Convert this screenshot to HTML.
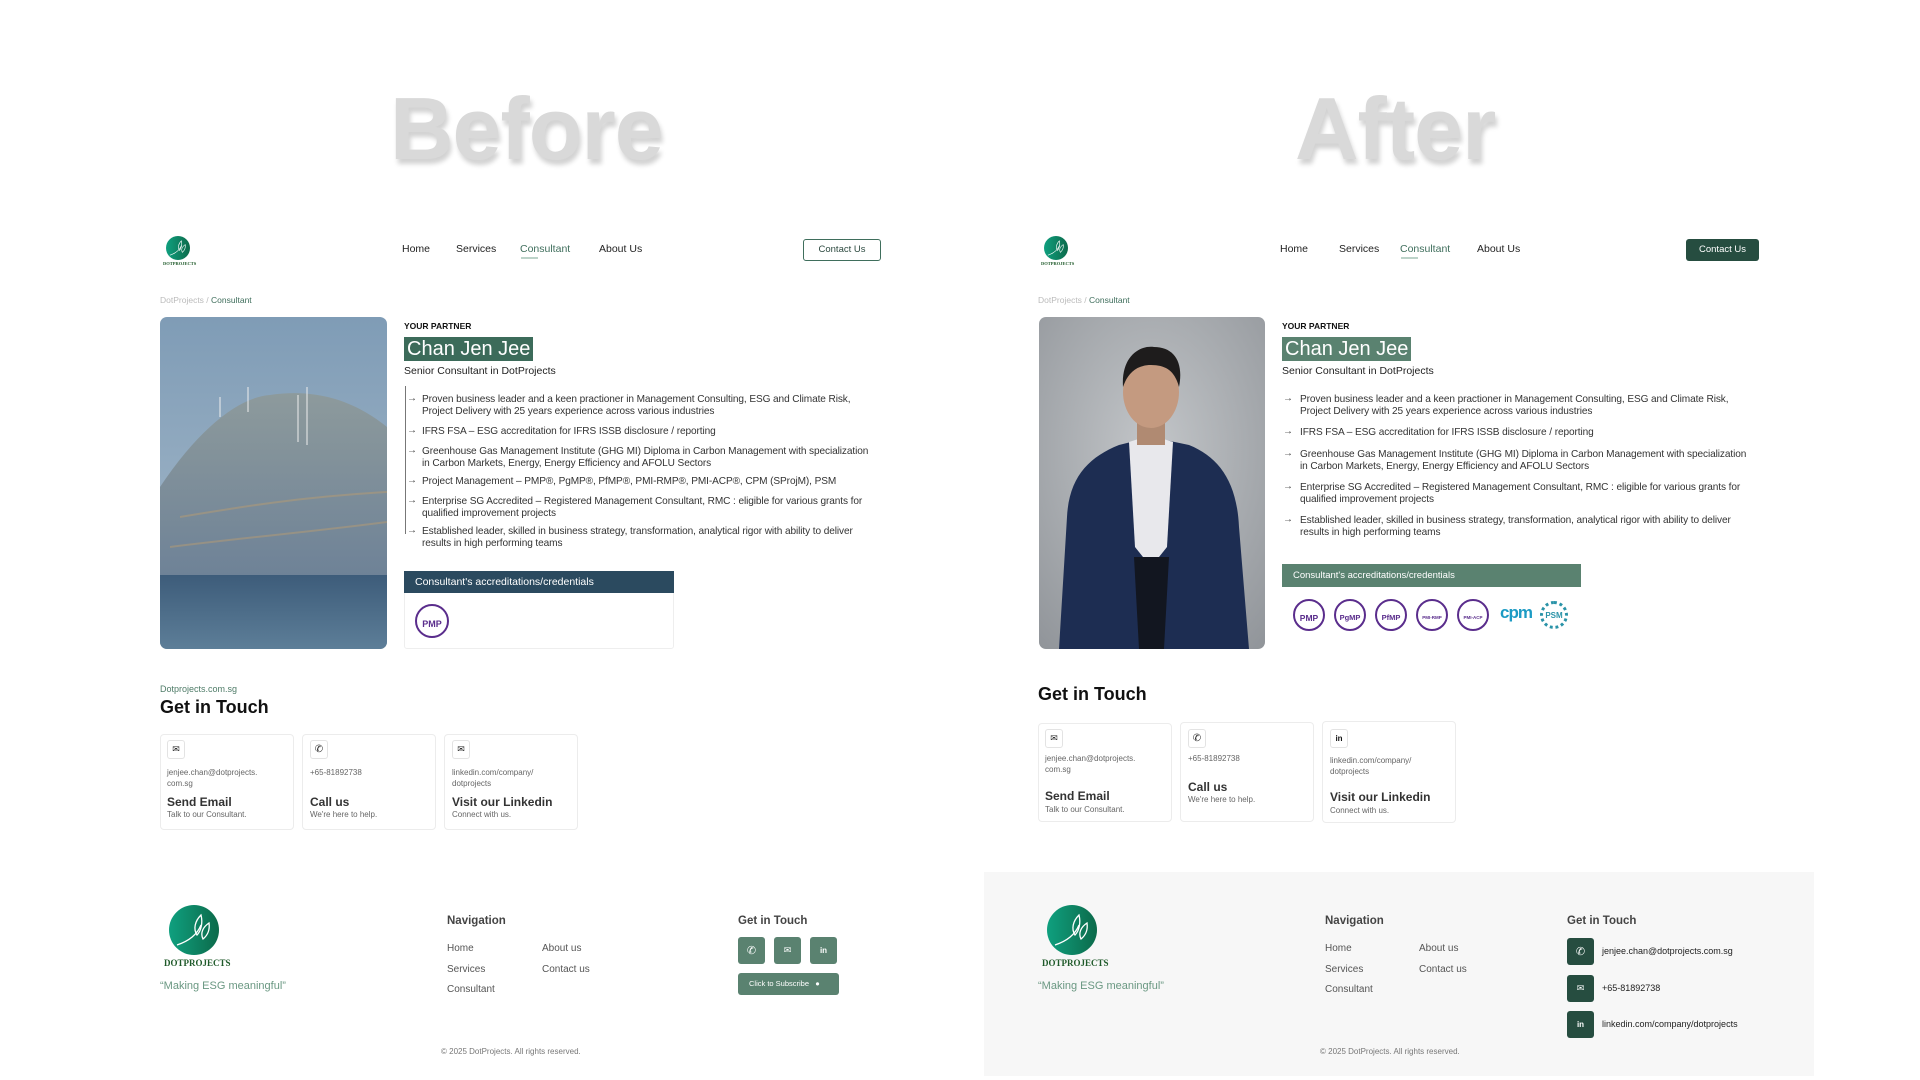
<!DOCTYPE html>
<html><head><meta charset="utf-8"><style>
*{margin:0;padding:0;box-sizing:border-box}
body{width:1920px;height:1080px;background:#fff;font-family:"Liberation Sans",sans-serif;color:#222;position:relative;overflow:hidden}
.a{position:absolute;white-space:nowrap}
.big{font-size:88px;font-weight:bold;color:#d9d9d9;text-shadow:2px 5px 5px rgba(0,0,0,.18);letter-spacing:-1px}
.nav{font-size:10.5px;color:#222}
.nav.act{color:#3f6e5c}
.ul{height:2px;background:#bcd3c9}
.bc{font-size:8.5px;color:#bbb}
.bc b{font-weight:normal;color:#3f6e5c}
.yp{font-size:8.5px;font-weight:bold;color:#111}
.name{background:#3c6b5a;color:#fff;font-size:20px;padding:0 3px;height:24px;line-height:24px}
.sub{font-size:10.5px;color:#222}
.bl{font-size:10.1px;color:#333;line-height:11.5px;letter-spacing:-.1px}
.ar{font-size:10px;color:#444}
.card{position:absolute;border:1px solid #ececec;border-radius:4px;background:#fff}
.ib{position:absolute;width:18px;height:19px;border:1px solid #e3e3e3;border-radius:3px;display:flex;align-items:center;justify-content:center}
.sm{font-size:8px;color:#666;line-height:10.5px;white-space:normal}
.ct{font-size:12px;font-weight:bold;color:#333}
.cd{font-size:8px;color:#666}
.fh{font-size:11.5px;color:#444;font-weight:bold}
.fl{font-size:10px;color:#555}
.sq{position:absolute;width:27px;height:27px;border-radius:3px;display:flex;align-items:center;justify-content:center}
.cp{font-size:8px;color:#777}
.logo{position:absolute}
</style></head><body>
<svg width="0" height="0" style="position:absolute"><defs>
<linearGradient id="lg" x1="0" y1="0" x2="1" y2="0"><stop offset="0" stop-color="#0fa07f"/><stop offset="1" stop-color="#0c6a4a"/></linearGradient>
<symbol id="lo" viewBox="0 0 50 50"><circle cx="25" cy="25" r="25" fill="url(#lg)"/><path d="M8 40 C20 36 28 30 32 20 M28 30 C24 24 26 16 32 10 C34 18 32 26 28 30Z M34 34 C31 28 34 22 40 18 C41 25 39 30 34 34Z" stroke="#fff" stroke-width="1.3" fill="none"/></symbol>
</defs></svg>

<div class="a big" style="left:390px;top:78px">Before</div>
<div class="a big" style="left:1295px;top:78px">After</div>

<!-- LEFT -->
<svg class="logo" style="left:166px;top:236px" width="24" height="24"><use href="#lo"/></svg>
<div class="a" style="left:163px;top:261px;font-size:4.5px;color:#1f5a2a;font-family:'Liberation Serif',serif;font-weight:bold">DOTPROJECTS</div>
<div class="a nav" style="left:402px;top:243px">Home</div>
<div class="a nav" style="left:456px;top:243px">Services</div>
<div class="a nav act" style="left:520px;top:243px">Consultant</div>
<div class="a ul" style="left:521px;top:257px;width:17px"></div>
<div class="a nav" style="left:599px;top:243px">About Us</div>
<div class="a" style="left:803px;top:239px;width:78px;height:22px;border:1.5px solid #3f6e5c;border-radius:3px;font-size:9.5px;text-align:center;line-height:19px;color:#2d4a40">Contact Us</div>
<div class="a bc" style="left:160px;top:295px">DotProjects / <b>Consultant</b></div>

<svg class="a" style="left:160px;top:317px" width="227" height="332"><defs>
<linearGradient id="sk" x1="0" y1="0" x2="0" y2="1"><stop offset="0" stop-color="#7f9cb6"/><stop offset="1" stop-color="#a9bccc"/></linearGradient>
<linearGradient id="mt" x1="0" y1="0" x2="0" y2="1"><stop offset="0" stop-color="#8d9a9c"/><stop offset="1" stop-color="#6e8297"/></linearGradient>
<linearGradient id="se" x1="0" y1="0" x2="0" y2="1"><stop offset="0" stop-color="#3d5c7a"/><stop offset="1" stop-color="#5d7e98"/></linearGradient>
<clipPath id="c1"><rect width="227" height="332" rx="7"/></clipPath></defs>
<g clip-path="url(#c1)"><rect width="227" height="332" fill="url(#sk)"/>
<path d="M0 170 C40 110 80 80 110 78 C150 72 190 80 227 110 L227 260 L0 260Z" fill="url(#mt)"/>
<path d="M20 200 C80 190 140 180 227 175 M10 230 C90 220 150 215 227 205" stroke="#b89b72" stroke-width="2" fill="none" opacity=".5"/>
<rect y="258" width="227" height="74" fill="url(#se)"/>
<g stroke="#eee" stroke-width="1"><line x1="60" y1="80" x2="60" y2="100"/><line x1="88" y1="70" x2="88" y2="95"/><line x1="138" y1="78" x2="138" y2="125"/><line x1="147" y1="70" x2="147" y2="128"/></g></g></svg>

<div class="a yp" style="left:404px;top:321px">YOUR PARTNER</div>
<div class="a name" style="left:404px;top:337px">Chan Jen Jee</div>
<div class="a sub" style="left:404px;top:365px">Senior Consultant in DotProjects</div>
<div class="a" style="left:405px;top:386px;width:1px;height:148px;background:#777"></div>
<div class="a bl" style="left:422px;top:394px">Proven business leader and a keen practioner in Management Consulting, ESG and Climate Risk,<br>Project Delivery with 25 years experience across various industries</div>
<div class="a bl" style="left:422px;top:426px">IFRS FSA – ESG accreditation for IFRS ISSB disclosure / reporting</div>
<div class="a bl" style="left:422px;top:446px">Greenhouse Gas Management Institute (GHG MI) Diploma in Carbon Management with specialization<br>in Carbon Markets, Energy, Energy Efficiency and AFOLU Sectors</div>
<div class="a bl" style="left:422px;top:476px">Project Management – PMP®, PgMP®, PfMP®, PMI-RMP®, PMI-ACP®, CPM (SProjM), PSM</div>
<div class="a bl" style="left:422px;top:496px">Enterprise SG Accredited – Registered Management Consultant, RMC : eligible for various grants for<br>qualified improvement projects</div>
<div class="a bl" style="left:422px;top:526px">Established leader, skilled in business strategy, transformation, analytical rigor with ability to deliver<br>results in high performing teams</div>
<div class="a ar" style="left:407px;top:393px">→</div><div class="a ar" style="left:407px;top:425px">→</div><div class="a ar" style="left:407px;top:445px">→</div><div class="a ar" style="left:407px;top:475px">→</div><div class="a ar" style="left:407px;top:495px">→</div><div class="a ar" style="left:407px;top:525px">→</div>
<div class="a" style="left:404px;top:571px;width:270px;height:78px;border:1px solid #eee;border-radius:3px"></div>
<div class="a" style="left:404px;top:571px;width:270px;height:22px;background:#2b4a5f;color:#fff;font-size:10.5px;line-height:22px;padding-left:11px">Consultant's accreditations/credentials</div>
<div class="a" style="left:415px;top:604px;width:34px;height:34px;border:2.5px solid #5a2d8c;border-radius:50%;font-size:9px;font-weight:bold;color:#5a2d8c;text-align:center;line-height:36px">PMP</div>

<div class="a" style="left:160px;top:684px;font-size:9px;color:#4f7c68">Dotprojects.com.sg</div>
<div class="a" style="left:160px;top:697px;font-size:18px;font-weight:bold;color:#111">Get in Touch</div>

<div class="card" style="left:160px;top:734px;width:134px;height:96px"></div>
<div class="card" style="left:302px;top:734px;width:134px;height:96px"></div>
<div class="card" style="left:444px;top:734px;width:134px;height:96px"></div>
<div class="ib" style="left:167px;top:740px;font-size:9px">✉</div>
<div class="ib" style="left:310px;top:740px;font-size:10px">✆</div>
<div class="ib" style="left:452px;top:740px;font-size:9px">✉</div>
<div class="a sm" style="left:167px;top:768px;width:120px">jenjee.chan@dotprojects.<br>com.sg</div>
<div class="a sm" style="left:310px;top:768px">+65-81892738</div>
<div class="a sm" style="left:452px;top:768px">linkedin.com/company/<br>dotprojects</div>
<div class="a ct" style="left:167px;top:795px">Send Email</div><div class="a cd" style="left:167px;top:810px">Talk to our Consultant.</div>
<div class="a ct" style="left:310px;top:795px">Call us</div><div class="a cd" style="left:310px;top:810px">We're here to help.</div>
<div class="a ct" style="left:452px;top:795px">Visit our Linkedin</div><div class="a cd" style="left:452px;top:810px">Connect with us.</div>

<!-- left footer -->
<svg class="logo" style="left:169px;top:905px" width="50" height="50"><use href="#lo"/></svg>
<div class="a" style="left:164px;top:958px;font-size:9px;color:#1f5a2a;font-family:'Liberation Serif',serif;font-weight:bold">DOTPROJECTS</div>
<div class="a" style="left:160px;top:980px;font-size:11px;color:#6a9882">“Making ESG meaningful”</div>
<div class="a fh" style="left:447px;top:915px">Navigation</div>
<div class="a fl" style="left:447px;top:943px">Home</div><div class="a fl" style="left:447px;top:964px">Services</div><div class="a fl" style="left:447px;top:984px">Consultant</div>
<div class="a fl" style="left:542px;top:943px">About us</div><div class="a fl" style="left:542px;top:964px">Contact us</div>
<div class="a fh" style="left:738px;top:915px">Get in Touch</div>
<div class="sq" style="left:738px;top:937px;background:#5a8270;color:#fff;font-size:11px">✆</div>
<div class="sq" style="left:774px;top:937px;background:#5a8270;color:#fff;font-size:9px">✉</div>
<div class="sq" style="left:810px;top:937px;background:#5a8270;color:#fff;font-size:8px;font-weight:bold">in</div>
<div class="a" style="left:738px;top:973px;width:101px;height:22px;background:#5a8270;border-radius:3px;color:#fff;font-size:7.5px;line-height:22px;padding-left:11px">Click to Subscribe &nbsp; ●</div>
<div class="a cp" style="left:441px;top:1047px">© 2025 DotProjects. All rights reserved.</div>

<!-- RIGHT -->
<svg class="logo" style="left:1044px;top:236px" width="24" height="24"><use href="#lo"/></svg>
<div class="a" style="left:1041px;top:261px;font-size:4.5px;color:#1f5a2a;font-family:'Liberation Serif',serif;font-weight:bold">DOTPROJECTS</div>
<div class="a nav" style="left:1280px;top:243px">Home</div>
<div class="a nav" style="left:1339px;top:243px">Services</div>
<div class="a nav act" style="left:1400px;top:243px">Consultant</div>
<div class="a ul" style="left:1401px;top:257px;width:17px"></div>
<div class="a nav" style="left:1477px;top:243px">About Us</div>
<div class="a" style="left:1686px;top:239px;width:73px;height:22px;background:#264d40;border-radius:3px;font-size:9.5px;text-align:center;line-height:22px;color:#fff">Contact Us</div>
<div class="a bc" style="left:1038px;top:295px">DotProjects / <b>Consultant</b></div>

<svg class="a" style="left:1039px;top:317px" width="226" height="332"><defs>
<radialGradient id="bg2" cx=".5" cy=".4" r=".8"><stop offset="0" stop-color="#c3c6c9"/><stop offset="1" stop-color="#8f9398"/></radialGradient>
<clipPath id="c2"><rect width="226" height="332" rx="7"/></clipPath></defs>
<g clip-path="url(#c2)"><rect width="226" height="332" fill="url(#bg2)"/>
<path d="M20 332 L28 200 C30 160 50 140 80 128 L112 120 L150 128 C180 140 198 165 200 210 L210 332Z" fill="#1d2d52"/>
<path d="M90 125 L112 118 L134 125 L128 230 L112 250 L96 230Z" fill="#e8e8ec"/>
<rect x="98" y="100" width="28" height="28" fill="#b08a72"/>
<ellipse cx="112" cy="75" rx="28" ry="36" fill="#c49a80"/>
<path d="M84 70 C82 40 100 28 115 30 C135 30 145 45 140 70 C136 55 128 48 112 48 C96 48 88 58 84 70Z" fill="#1e1c1c"/>
<path d="M95 240 L100 332 L125 332 L130 240Z" fill="#121620"/></g></svg>

<div class="a yp" style="left:1282px;top:321px">YOUR PARTNER</div>
<div class="a name" style="left:1282px;top:337px;background:#5a8270">Chan Jen Jee</div>
<div class="a sub" style="left:1282px;top:365px">Senior Consultant in DotProjects</div>
<div class="a bl" style="left:1300px;top:394px">Proven business leader and a keen practioner in Management Consulting, ESG and Climate Risk,<br>Project Delivery with 25 years experience across various industries</div>
<div class="a bl" style="left:1300px;top:427px">IFRS FSA – ESG accreditation for IFRS ISSB disclosure / reporting</div>
<div class="a bl" style="left:1300px;top:449px">Greenhouse Gas Management Institute (GHG MI) Diploma in Carbon Management with specialization<br>in Carbon Markets, Energy, Energy Efficiency and AFOLU Sectors</div>
<div class="a bl" style="left:1300px;top:482px">Enterprise SG Accredited – Registered Management Consultant, RMC : eligible for various grants for<br>qualified improvement projects</div>
<div class="a bl" style="left:1300px;top:515px">Established leader, skilled in business strategy, transformation, analytical rigor with ability to deliver<br>results in high performing teams</div>
<div class="a ar" style="left:1283px;top:393px">→</div><div class="a ar" style="left:1283px;top:426px">→</div><div class="a ar" style="left:1283px;top:448px">→</div><div class="a ar" style="left:1283px;top:481px">→</div><div class="a ar" style="left:1283px;top:514px">→</div>
<div class="a" style="left:1282px;top:564px;width:299px;height:23px;background:#5a8270;color:#fff;font-size:9.5px;line-height:23px;padding-left:11px">Consultant's accreditations/credentials</div>
<div class="a" style="left:1293px;top:599px;width:32px;height:32px;border:2.5px solid #5a2d8c;border-radius:50%;font-size:8.5px;font-weight:bold;color:#5a2d8c;text-align:center;line-height:34px">PMP</div>
<div class="a" style="left:1334px;top:599px;width:32px;height:32px;border:2.5px solid #5a2d8c;border-radius:50%;font-size:7.5px;font-weight:bold;color:#5a2d8c;text-align:center;line-height:34px">PgMP</div>
<div class="a" style="left:1375px;top:599px;width:32px;height:32px;border:2.5px solid #5a2d8c;border-radius:50%;font-size:7.5px;font-weight:bold;color:#5a2d8c;text-align:center;line-height:34px">PfMP</div>
<div class="a" style="left:1416px;top:599px;width:32px;height:32px;border:2.5px solid #5a2d8c;border-radius:50%;font-size:4.5px;font-weight:bold;color:#5a2d8c;text-align:center;line-height:34px">PMI-RMP</div>
<div class="a" style="left:1457px;top:599px;width:32px;height:32px;border:2.5px solid #5a2d8c;border-radius:50%;font-size:4.5px;font-weight:bold;color:#5a2d8c;text-align:center;line-height:34px">PMI-ACP</div>
<div class="a" style="left:1500px;top:603px;font-size:17px;font-weight:bold;color:#1c9bc4;letter-spacing:-1px">cpm</div>
<div class="a" style="left:1540px;top:601px;width:28px;height:28px;border:3px dotted #2a93a8;border-radius:50%;font-size:8px;font-weight:bold;color:#2a93a8;text-align:center;line-height:23px">PSM</div>

<div class="a" style="left:1038px;top:684px;font-size:18px;font-weight:bold;color:#111">Get in Touch</div>
<div class="card" style="left:1038px;top:723px;width:134px;height:99px"></div>
<div class="card" style="left:1180px;top:722px;width:134px;height:100px"></div>
<div class="card" style="left:1322px;top:721px;width:134px;height:102px"></div>
<div class="ib" style="left:1045px;top:729px;font-size:9px">✉</div>
<div class="ib" style="left:1188px;top:729px;font-size:10px">✆</div>
<div class="ib" style="left:1330px;top:729px;font-size:8px;font-weight:bold;color:#111">in</div>
<div class="a sm" style="left:1045px;top:754px">jenjee.chan@dotprojects.<br>com.sg</div>
<div class="a sm" style="left:1188px;top:754px">+65-81892738</div>
<div class="a sm" style="left:1330px;top:756px">linkedin.com/company/<br>dotprojects</div>
<div class="a ct" style="left:1045px;top:789px">Send Email</div><div class="a cd" style="left:1045px;top:805px">Talk to our Consultant.</div>
<div class="a ct" style="left:1188px;top:780px">Call us</div><div class="a cd" style="left:1188px;top:795px">We're here to help.</div>
<div class="a ct" style="left:1330px;top:790px">Visit our Linkedin</div><div class="a cd" style="left:1330px;top:806px">Connect with us.</div>

<div class="a" style="left:984px;top:872px;width:830px;height:204px;background:#f7f7f7"></div>
<svg class="logo" style="left:1047px;top:905px" width="50" height="50"><use href="#lo"/></svg>
<div class="a" style="left:1042px;top:958px;font-size:9px;color:#1f5a2a;font-family:'Liberation Serif',serif;font-weight:bold">DOTPROJECTS</div>
<div class="a" style="left:1038px;top:980px;font-size:11px;color:#6a9882">“Making ESG meaningful”</div>
<div class="a fh" style="left:1325px;top:915px">Navigation</div>
<div class="a fl" style="left:1325px;top:943px">Home</div><div class="a fl" style="left:1325px;top:964px">Services</div><div class="a fl" style="left:1325px;top:984px">Consultant</div>
<div class="a fl" style="left:1419px;top:943px">About us</div><div class="a fl" style="left:1419px;top:964px">Contact us</div>
<div class="a fh" style="left:1567px;top:915px">Get in Touch</div>
<div class="sq" style="left:1567px;top:938px;background:#264d40;color:#fff;font-size:11px">✆</div>
<div class="sq" style="left:1567px;top:975px;background:#264d40;color:#fff;font-size:9px">✉</div>
<div class="sq" style="left:1567px;top:1011px;background:#264d40;color:#fff;font-size:8px;font-weight:bold">in</div>
<div class="a" style="left:1602px;top:946px;font-size:9px;color:#222">jenjee.chan@dotprojects.com.sg</div>
<div class="a" style="left:1602px;top:983px;font-size:9px;color:#222">+65-81892738</div>
<div class="a" style="left:1602px;top:1019px;font-size:9px;color:#222">linkedin.com/company/dotprojects</div>
<div class="a cp" style="left:1320px;top:1047px">© 2025 DotProjects. All rights reserved.</div>
</body></html>
